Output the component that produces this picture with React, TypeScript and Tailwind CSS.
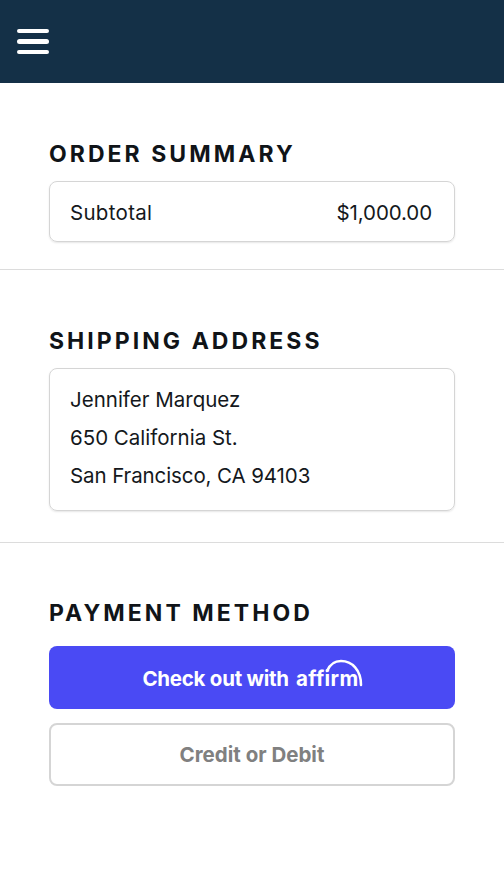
const fontClass = "font-['Inter','Noto_Sans',sans-serif]";

function SectionTitle({ children }: { children: string }) {
  return <h2 className="pt-[1px] text-[23px] leading-[29px] font-bold tracking-[3.05px] text-[#101418]">{children}</h2>;
}

export default function App() {
  return (
    <div className={`h-[870px] w-[504px] overflow-hidden bg-white text-[#14181c] ${fontClass}`}>
      <header className="flex h-[83px] items-center bg-[#143047] pl-[17px]">
        <div className="flex w-[32px] flex-col gap-[6px]">
          <span className="h-[4.5px] rounded-full bg-white" />
          <span className="h-[4.5px] rounded-full bg-white" />
          <span className="h-[4.5px] rounded-full bg-white" />
        </div>
      </header>

      <section className="border-b border-[#dcdcdc] px-[49px] pt-[56px] pb-[27px]">
        <SectionTitle>ORDER SUMMARY</SectionTitle>
        <div className="mt-[12px] flex h-[61px] items-center justify-between rounded-[8px] border border-[#d5d5d5] pt-[3px] pr-[22px] pl-[20px] text-[20.5px] shadow-[0_1px_2px_rgba(0,0,0,0.1)]">
          <span className="tracking-[0.3px]">Subtotal</span>
          <span className="tracking-[-0.1px]">$1,000.00</span>
        </div>
      </section>

      <section className="border-b border-[#dcdcdc] px-[49px] pt-[56px] pb-[31px]">
        <SectionTitle>SHIPPING ADDRESS</SectionTitle>
        <div className="mt-[12px] h-[143px] rounded-[8px] border border-[#d5d5d5] px-[20px] py-[12px] text-[20.5px] leading-[38px] shadow-[0_1px_2px_rgba(0,0,0,0.1)]">
          <div>Jennifer Marquez</div>
          <div>650 California St.</div>
          <div className="tracking-[-0.1px]">San Francisco, CA 94103</div>
        </div>
      </section>

      <section className="px-[49px] pt-[55px]">
        <SectionTitle>PAYMENT METHOD</SectionTitle>
        <button className="mt-[18px] flex h-[63px] w-full items-center justify-center rounded-[8px] bg-[#4a4af4] pt-[4px] pr-[3px] text-[20.5px] font-bold text-white">
          <span className="tracking-[-0.25px]">Check out with</span>
          <span className="relative ml-[7px] tracking-[0.4px]">
            affirm
            <svg className="absolute top-[-5px] left-[29px] h-[28px] w-[40px]" viewBox="0 0 40 28" fill="none">
              <path d="M2 12 C5 5 10 2 16 2 C27 2 36 11 36 26" stroke="white" strokeWidth="2.5" strokeLinecap="round" />
            </svg>
          </span>
        </button>
        <button className="mt-[14px] flex h-[63px] w-full items-center justify-center rounded-[8px] border-2 border-[#d5d5d5] pt-[2px] text-[20.5px] font-bold text-[#808080]">
          Credit or Debit
        </button>
      </section>
    </div>
  );
}
